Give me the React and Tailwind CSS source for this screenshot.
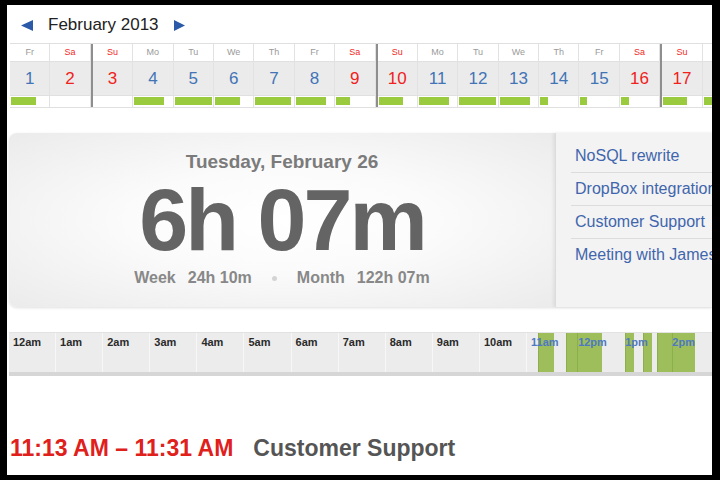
const days = [
  { n: 1, d: "Fr", bar: 25 },
  { n: 2, d: "Sa", bar: 0 },
  { n: 3, d: "Su", bar: 0 },
  { n: 4, d: "Mo", bar: 30 },
  { n: 5, d: "Tu", bar: 37 },
  { n: 6, d: "We", bar: 25 },
  { n: 7, d: "Th", bar: 36 },
  { n: 8, d: "Fr", bar: 30 },
  { n: 9, d: "Sa", bar: 14 },
  { n: 10, d: "Su", bar: 24 },
  { n: 11, d: "Mo", bar: 30 },
  { n: 12, d: "Tu", bar: 37 },
  { n: 13, d: "We", bar: 30 },
  { n: 14, d: "Th", bar: 8 },
  { n: 15, d: "Fr", bar: 7 },
  { n: 16, d: "Sa", bar: 8 },
  { n: 17, d: "Su", bar: 24 },
  { n: 18, d: "Mo", bar: 8 },
];

const hours = [
  "12am", "1am", "2am", "3am", "4am", "5am", "6am", "7am",
  "8am", "9am", "10am", "11am", "12pm", "1pm", "2pm", "3pm",
];

// tracked blocks on the day timeline (px from timeline left)
const blocks = [
  { left: 529, width: 16 },
  { left: 557, width: 11 },
  { left: 568, width: 25 },
  { left: 616, width: 9 },
  { left: 634, width: 9 },
  { left: 648, width: 15 },
  { left: 663, width: 23 },
];

const projects = ["NoSQL rewrite", "DropBox integration", "Customer Support", "Meeting with James"];

function DayColumn({ day }) {
  const weekend = day.d === "Sa" || day.d === "Su";
  const sunday = day.d === "Su";
  return (
    <div
      className={
        "flex shrink-0 flex-col border-r border-[#e2e2e2] " +
        (sunday ? "w-[42.4px] border-l-2 border-l-[#8e8e8e]" : "w-[40.4px]")
      }
    >
      <div
        className={
          "h-[17px] bg-white text-center text-[9px] leading-[17px] " +
          (weekend ? "text-[#f2281e]" : "text-[#9a9a9a]")
        }
      >
        {day.d}
      </div>
      <div
        className={
          "h-[34px] border-t border-[#e0e0e0] bg-[#ebebeb] text-center text-[17px] leading-[33px] " +
          (weekend ? "text-[#f0221b]" : "text-[#4274b6]")
        }
      >
        {day.n}
      </div>
      <div className="h-[12px] border-t border-[#e0e0e0] bg-white pl-[1px] pt-[1px]">
        {day.bar > 0 && <div className="h-[8px] bg-[#9acb3f]" style={{ width: day.bar }} />}
      </div>
    </div>
  );
}

export default function App() {
  return (
    <div className="h-[480px] w-[720px] overflow-hidden bg-black pl-[7px] pt-[5px] font-['Liberation_Sans',Arial,sans-serif]">
      <div className="h-[470px] w-[705px] overflow-hidden bg-white">
        {/* Month header */}
        <div className="flex h-[38px] items-start pl-[14px] pt-[10px]">
          <div className="flex h-[20px] items-center">
            <svg width="12" height="11" viewBox="0 0 12 11">
              <polygon points="12,0 12,11 0,5.5" fill="#2b5aa8" />
            </svg>
            <span className="ml-[15px] text-[17px] leading-[20px] text-[#222]">February 2013</span>
            <svg width="11" height="11" viewBox="0 0 11 11" className="ml-[15px]">
              <polygon points="0,0 0,11 11,5.5" fill="#2b5aa8" />
            </svg>
          </div>
        </div>

        {/* Day strip */}
        <div className="ml-[3px] flex border-y border-[#e0e0e0]">
          {days.map((day) => (
            <DayColumn key={day.n} day={day} />
          ))}
        </div>

        {/* Day summary */}
        <div className="ml-[2px] mt-[25px] flex h-[174px] shadow-[0_1px_3px_rgba(0,0,0,0.12)] rounded-l-[8px]">
          <div className="flex w-[546px] shrink-0 flex-col items-center rounded-l-[8px] bg-[radial-gradient(ellipse_at_center,#ffffff_0%,#fbfbfb_40%,#ebebeb_100%)] pt-[18px]">
            <div className="text-[19px] font-bold leading-[22px] text-[#7b7b7b]">Tuesday, February 26</div>
            <div className="mt-[3px] text-[88px] font-bold leading-[88px] tracking-[-3px] text-[#646464]">6h 07m</div>
            <div className="mt-[5px] flex items-center text-[16px] font-bold leading-[18px] text-[#888]">
              <span>Week</span>
              <span className="ml-[12px]">24h 10m</span>
              <span className="mx-[20px] h-[5px] w-[5px] rounded-full bg-[#d4d4d4]" />
              <span>Month</span>
              <span className="ml-[12px]">122h 07m</span>
            </div>
          </div>
          <div className="flex-1 border-l border-[#dcdcdc] bg-[#f3f3f3] pl-[15px] pt-[7px] shadow-[-2px_0_3px_rgba(0,0,0,0.06)]">
            {projects.map((p, i) => (
              <div
                key={p}
                className={
                  "h-[33px] whitespace-nowrap pl-[4px] text-[16px] leading-[32px] text-[#3f66ad] " +
                  (i < projects.length - 1 ? "border-b border-[#dcdcdc]" : "")
                }
              >
                {p}
              </div>
            ))}
          </div>
        </div>

        {/* Hour timeline */}
        <div className="relative ml-[2px] mt-[25px] flex h-[44px] border-b-4 border-t border-b-[#d6d6d6] border-t-[#e2e2e2] bg-[#ececec]">
          {blocks.map((b) => (
            <div
              key={b.left}
              className="absolute top-0 h-[39px] border-l border-[#8dae4d] bg-[#9dbe5a]"
              style={{ left: b.left, width: b.width }}
            />
          ))}
          {hours.map((h, i) => (
            <div
              key={h}
              className={
                "relative w-[47.1px] shrink-0 pl-[4px] pt-[4px] text-[11px] font-bold leading-[11px] " +
                (i < 11 ? "border-r border-[#f7f7f7] text-[#2a2a2a]" : "text-[#4f79c0]")
              }
            >
              {h}
            </div>
          ))}
        </div>

        {/* Selected entry */}
        <div className="ml-[3px] mt-[59px] flex whitespace-nowrap text-[23px] font-bold leading-[26px]">
          <span className="text-[#e0201b]">11:13 AM – 11:31 AM</span>
          <span className="ml-[20px] text-[#555]">Customer Support</span>
        </div>
      </div>
    </div>
  );
}
